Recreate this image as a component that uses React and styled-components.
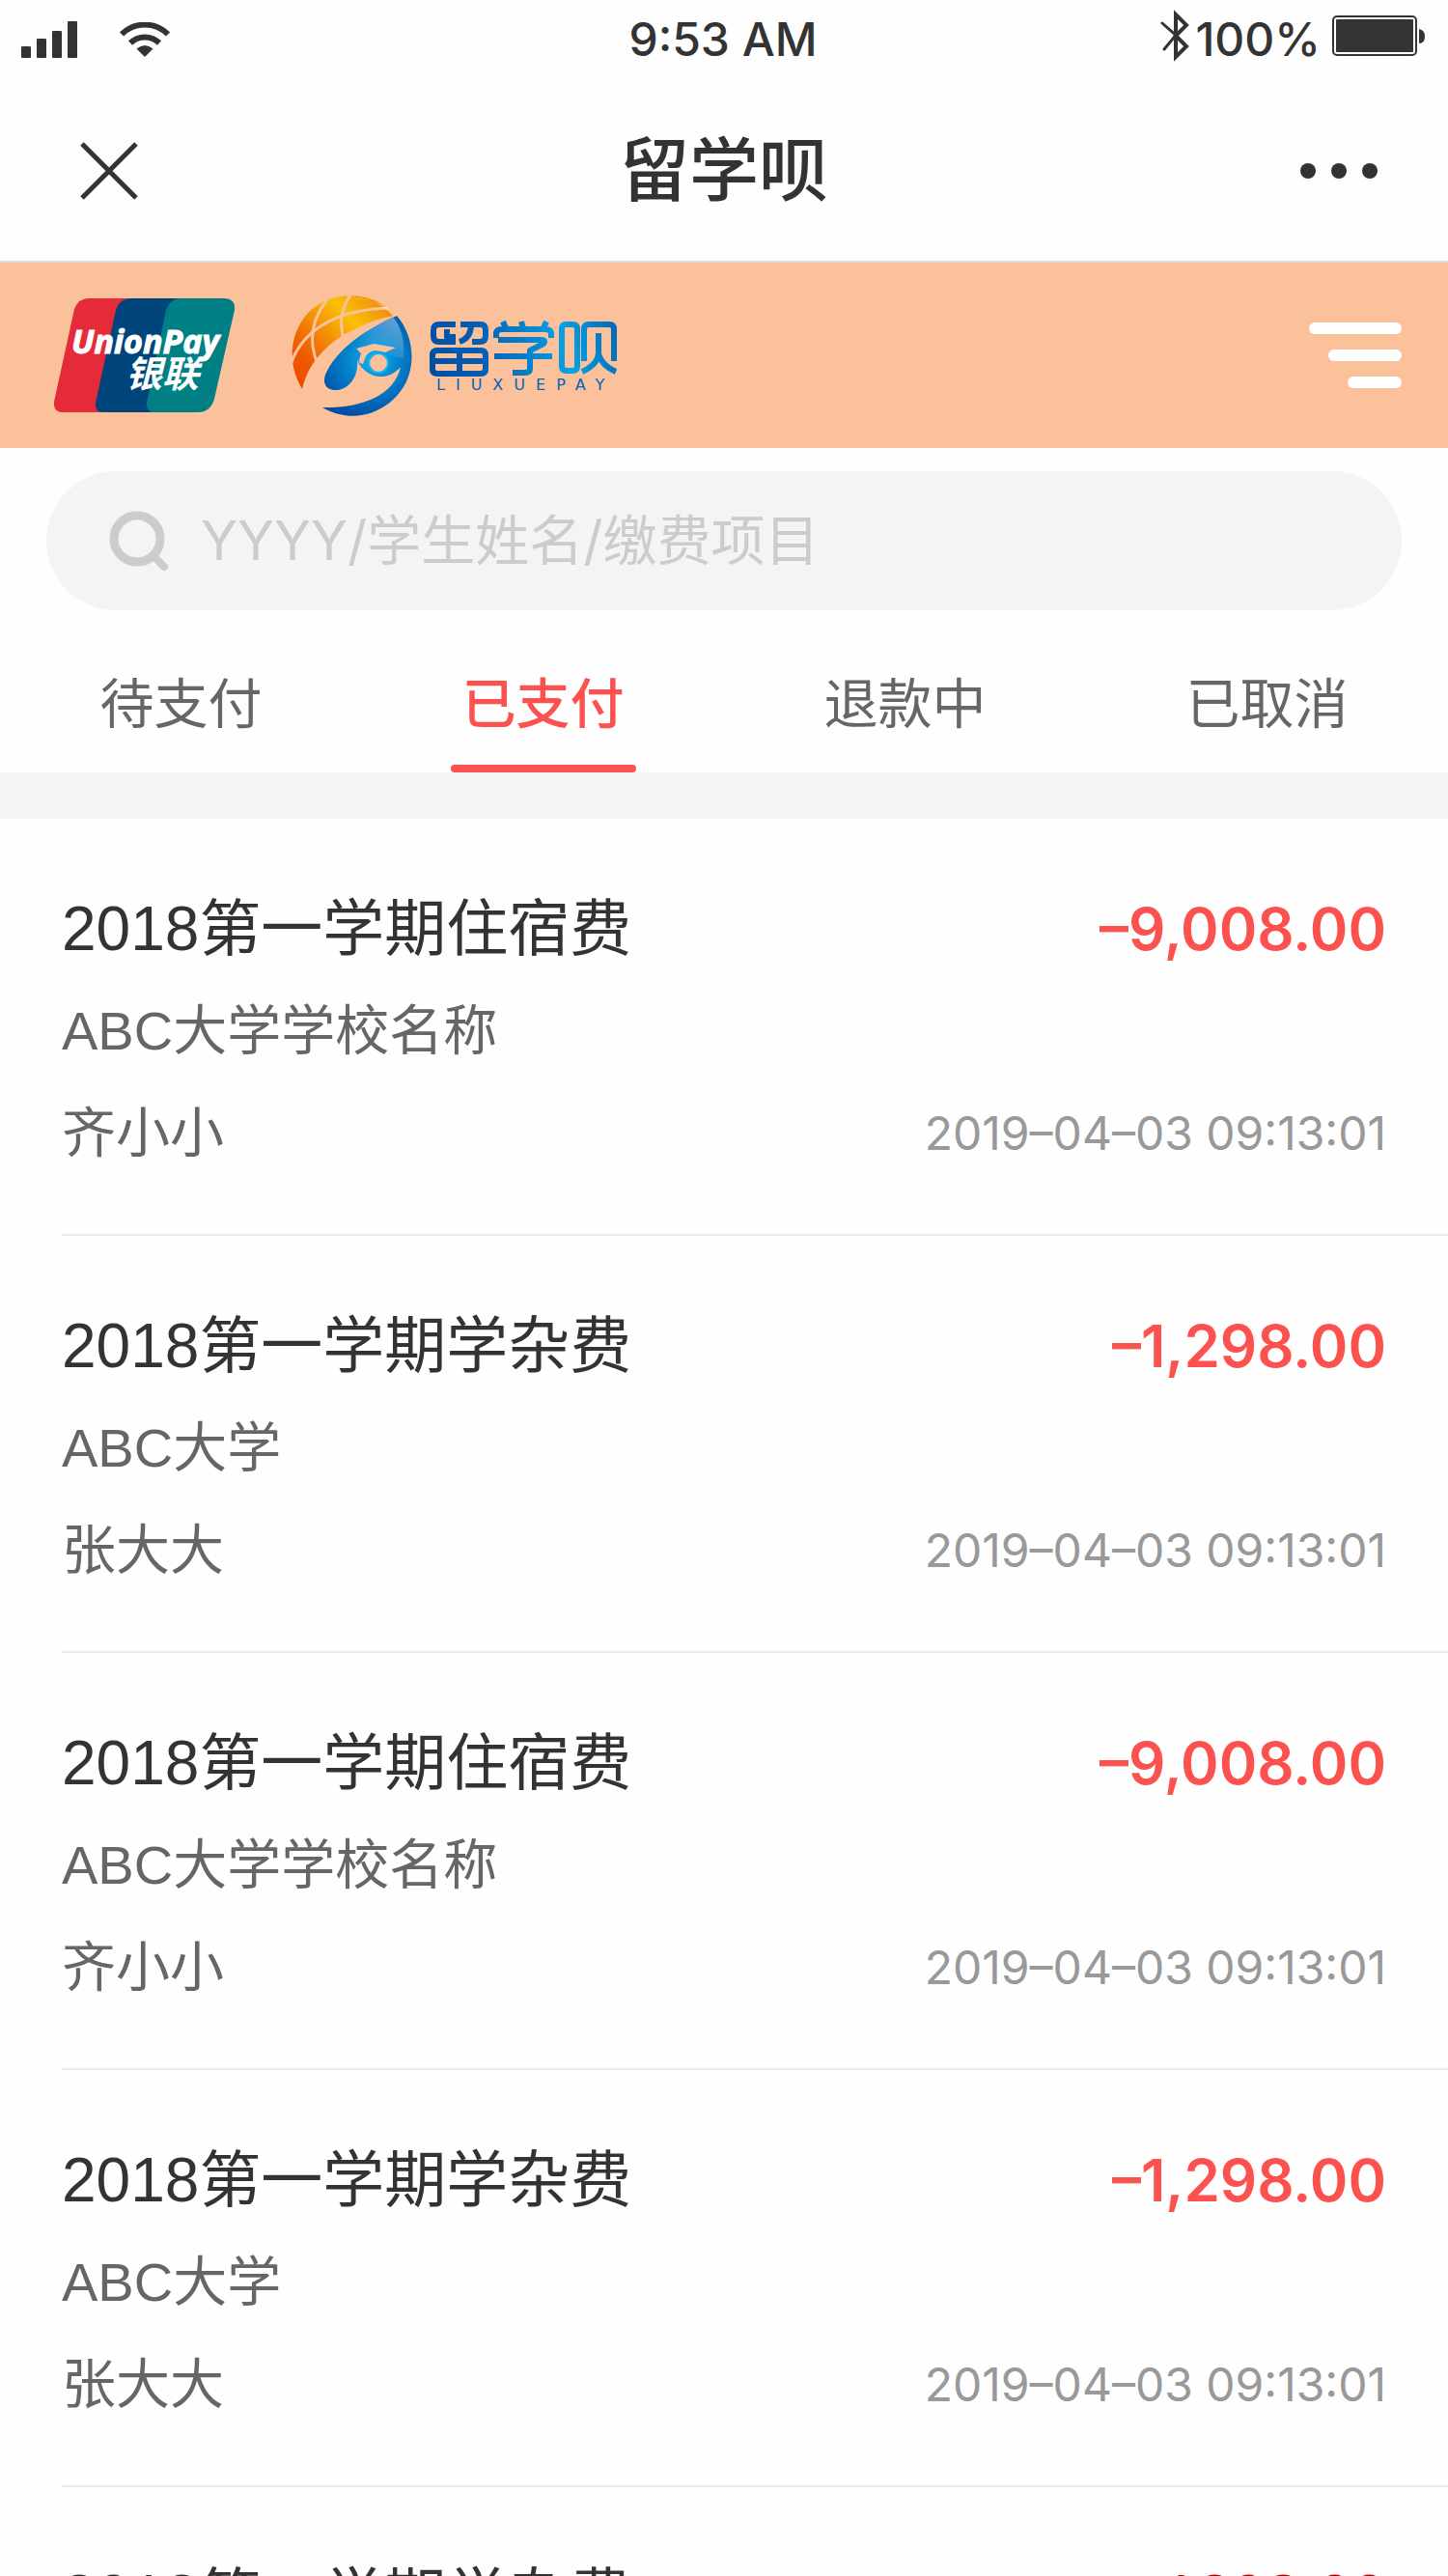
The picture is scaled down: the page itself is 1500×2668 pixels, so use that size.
import React, { useId, useState } from 'react';
import styled, { createGlobalStyle, css } from 'styled-components';

const textStack = '"Liberation Sans", "Noto Sans CJK SC", sans-serif';
const figureStack = 'Inter, "Noto Sans CJK SC", sans-serif';

const GlobalStyle = createGlobalStyle`
  * { box-sizing: border-box; }
  body { margin: 0; background: #fff; }
  button, input { font: inherit; color: inherit; border: 0; background: none; padding: 0; margin: 0; }
  button { cursor: pointer; }
`;

const Screen = styled.div`
  display: flex;
  flex-direction: column;
  height: 100vh;
  overflow: hidden;
  background: #fefefe;
  color: #333;
  font-family: ${textStack};
`;

const StatusBar = styled.div`
  display: grid;
  grid-template-columns: 1fr auto 1fr;
  align-items: center;
  flex: none;
  height: 80px;
  padding: 2px 24px 0 22px;
  font: 500 48px/56px ${figureStack};
`;

const StatusGroup = styled.div`
  display: flex;
  align-items: center;
  justify-content: ${(p) => (p.$end ? 'flex-end' : 'flex-start')};
  gap: ${(p) => p.$gap}px;
  ${(p) => p.$end && css`
    svg { margin-bottom: 8px; }
  `}
`;

const NavBar = styled.header`
  display: grid;
  grid-template-columns: 1fr auto 1fr;
  align-items: center;
  flex: none;
  height: 192px;
  padding: 4px 72px 0;
  border-bottom: 2px solid #ddd;
`;

const NavTitle = styled.h1`
  margin: 0;
  font-size: 72px;
  line-height: 96px;
  font-weight: 500;
`;

const IconButton = styled.button`
  display: flex;
  justify-content: center;
  justify-self: ${(p) => (p.$end ? 'end' : 'start')};
  width: 82px;
`;

const BrandBar = styled.div`
  display: flex;
  align-items: center;
  flex: none;
  gap: 58px;
  height: 192px;
  padding: 0 48px 0 56px;
  background: #fac19b;
`;

const MenuButton = styled.button`
  display: flex;
  margin-left: auto;
`;

const SearchBox = styled.label`
  display: flex;
  align-items: center;
  flex: none;
  gap: 32px;
  height: 144px;
  margin: 24px 48px 0;
  padding: 0 64px;
  border-radius: 72px;
  background: #f4f4f4;
`;

const SearchInput = styled.input`
  flex: 1;
  min-width: 0;
  height: 84px;
  font-family: ${figureStack};
  font-size: 56px;
  outline: none;
  &::placeholder { color: #ccc; opacity: 1; }
`;

const Tabs = styled.nav`
  display: grid;
  grid-template-columns: repeat(4, 1fr);
  flex: none;
  height: 168px;
`;

const Tab = styled.button`
  display: flex;
  flex-direction: column;
  align-items: center;
  justify-content: flex-end;
  gap: 22px;
  font-size: 56px;
  line-height: 80px;
  font-weight: ${(p) => (p.$active ? 500 : 400)};
  color: ${(p) => (p.$active ? '#fb524f' : '#666')};
  &::after {
    content: '';
    width: 192px;
    height: 8px;
    border-radius: 4px;
    background: ${(p) => (p.$active ? '#fb524f' : 'transparent')};
  }
`;

const List = styled.ul`
  flex: 1;
  min-height: 0;
  margin: 0;
  padding: 0;
  list-style: none;
  border-top: 48px solid #f4f4f4;
  overflow-y: auto;
  scrollbar-width: none;
`;

const Bill = styled.li`
  display: flex;
  flex-direction: column;
  gap: 2px;
  height: 432px;
  margin-left: 64px;
  padding: 62px 64px 0 0;
  border-bottom: 2px solid #eaeaea;
`;

const BillLine = styled.div`
  display: flex;
  align-items: center;
  justify-content: space-between;
  min-height: 104px;
  color: #666;
  font-size: 56px;
  line-height: 80px;
`;

const BillTitle = styled.h2`
  margin: 0;
  color: #333;
  font-size: 64px;
  line-height: 96px;
  font-weight: 400;
`;

const Amount = styled.strong`
  color: #fb524f;
  font: 600 60px/96px ${figureStack};
  ${(p) => p.$deep && css`
    color: #c00;
    font: 400 64px/96px ${textStack};
  `}
`;

const PaidAt = styled.time`
  color: #999;
  font-family: ${figureStack};
  font-size: 48px;
`;

const Signal = () => (
  <svg width="58" height="38" viewBox="0 0 58 38" fill="#333" aria-hidden="true">
    <rect y="26" width="10" height="12" rx="1" />
    <rect x="16" y="18" width="10" height="20" rx="1" />
    <rect x="32" y="10" width="10" height="28" rx="1" />
    <rect x="48" width="10" height="38" rx="1" />
  </svg>
);

const Wifi = () => (
  <svg width="52" height="36" viewBox="0 0 52 36" fill="none" stroke="#333" strokeWidth="6" aria-hidden="true">
    <path d="M2 12.500a34 34 0 0 1 48 0" />
    <path d="M11 21.500a21.500 21.500 0 0 1 30 0" />
    <path d="M17.500 27.500q8.500-7 17 0L26 36z" fill="#333" stroke="none" />
  </svg>
);

const Bluetooth = () => (
  <svg width="30" height="54" viewBox="0 0 30 54" fill="none" stroke="#333" aria-hidden="true">
    <path d="M2 14l14 12.500L4 41" strokeWidth="3" strokeLinecap="round" />
    <path d="M16 5v44L27 38 16 27 27 16z" strokeWidth="4" />
  </svg>
);

const Battery = () => (
  <svg width="96" height="42" viewBox="0 0 96 42" fill="#333" aria-hidden="true">
    <rect x="1" y="1" width="86" height="40" rx="4" fill="none" stroke="#333" strokeWidth="2" />
    <rect x="4" y="4" width="80" height="34" rx="1" />
    <path d="M90 14q6 1 6 8t-6 7z" />
  </svg>
);

const UnionPayLogo = () => (
  <svg width="188" height="118" viewBox="0 0 188 118" role="img" aria-label="UnionPay 银联">
    <path d="M36 0h50L60 118H9q-10 0-9-11L21 11Q25 0 36 0z" fill="#e52a3a" />
    <path d="M81 0h58L120 118H51q-9 0-8-10L64 12Q68 0 81 0z" fill="#00447c" />
    <path d="M132 0h44q12 0 11 12L166 104q-4 14-17 14h-45q-9 0-8-10L116 12Q120 0 132 0z" fill="#007f84" />
    <g fill="#fff" fontStyle="italic" fontWeight="700">
      <text x="18" y="57" fontFamily='"Open Sans", sans-serif' fontSize="34" stroke="#fff" strokeWidth="1">UnionPay</text>
      <text x="74" y="92" fontFamily='"Noto Sans CJK SC", sans-serif' fontSize="38">银联</text>
    </g>
  </svg>
);

const LiuxuePayLogo = () => {
  const id = useId();
  const ref = (name) => `url(#${id}${name})`;
  return (
    <svg width="338" height="126" viewBox="0 0 338 126" role="img" aria-label="留学呗 LIUXUEPAY">
      <defs>
        <linearGradient id={`${id}sun`} x1="0" y1=".9" x2="1" y2=".1">
          <stop offset="0" stopColor="#ec4a00" />
          <stop offset=".2" stopColor="#ee5a04" />
          <stop offset=".45" stopColor="#f49208" />
          <stop offset=".66" stopColor="#fbc005" />
          <stop offset="1" stopColor="#f08010" />
        </linearGradient>
        <radialGradient id={`${id}sea`} gradientUnits="userSpaceOnUse" cx="84" cy="68" r="60">
          <stop offset="0" stopColor="#10b2ee" />
          <stop offset=".45" stopColor="#0583cc" />
          <stop offset="1" stopColor="#004fa6" />
        </radialGradient>
        <linearGradient id={`${id}shine`} x1="1" y1="0" x2=".4" y2=".8">
          <stop offset="0" stopColor="#fff" stopOpacity=".6" />
          <stop offset="1" stopColor="#fff" stopOpacity="0" />
        </linearGradient>
        <linearGradient id={`${id}word`} gradientUnits="userSpaceOnUse" x1="144" y1="80" x2="336" y2="30">
          <stop offset="0" stopColor="#004ea4" />
          <stop offset=".3" stopColor="#0560b4" />
          <stop offset=".72" stopColor="#05a2e4" />
          <stop offset="1" stopColor="#0668b8" />
        </linearGradient>
      </defs>
      <path d="M11 98C-12 60 6 14 42 4c24-7 50-1 66 18C80 26 68 36 55 41 38 52 18 68 11 98z" fill={ref('sun')} />
      <g fill="none" stroke="#fac19b" strokeWidth="3">
        <path d="M0 70C14 32 54 15 102 14" />
        <path d="M61 1Q47 20 54 46" />
        <path d="M38 4Q12 36 27 72" />
      </g>
      <path
        d="M109 22C123 38 128 62 122 82C113 114 72 140 32 117C70 118 106 106 113 75C98 92 76 86 68 68C70 86 58 99 46 99C34 99 31 89 37 79C50 54 80 34 109 22z"
        fill={ref('sea')}
      />
      <path d="M62 4c38-2 58 30 54 62-16 0-26-16-44-14-10 1-17 7-26 10C62 42 86 32 109 22 96 8 80 5 62 4z" fill={ref('shine')} />
      <circle cx="90" cy="71" r="11" fill="#10b2ee" />
      <circle cx="90" cy="71" r="9" fill="#fac19b" />
      <path d="M67 56l18-5 23 4-11 5q-15-5-20 4l-3 8q-5-1-4-4l2-7z" fill="#fac19b" />
      <g fill="none" stroke={ref('word')} strokeWidth="6" strokeLinejoin="round">
        <path d="M170 31h-17q-6 0-6 6v6q0 6 6 6h17M161 36v8h9M175 31h21q5 0 5 6v6q0 6-6 6h-8M186 31q0 14-12 18" />
        <path d="M151 58h45q5 0 5 5v14q0 5-5 5h-45q-5 0-5-5V63q0-5 5-5zM147 69h55M174 58v24" />
        <path d="M212 45v-4q0-5 6-5h45q6 0 6 5v4M219 28l3 7M238 28l2 7M264 28l-3 7M214 47h45q5 0 2 4l-14 7v19q0 4-5 4h-13M210 64h60" />
        <path d="M284 31h7q5 0 5 5v38q0 5-5 5h-6q-5 0-5-5V36q0-5 4-5zM303 69V36q0-5 5-5h21q5 0 5 5v33M318 40v20q0 12-17 20M318 62q4 12 18 18" />
      </g>
      <text x="150" y="99" fill="#0564b6" fontFamily='"DejaVu Sans", sans-serif' fontSize="16" letterSpacing="11">LIUXUEPAY</text>
    </svg>
  );
};

const bills = [
  { id: 1, title: '2018第一学期住宿费', school: 'ABC大学学校名称', student: '齐小小', amount: '–9,008.00' },
  { id: 2, title: '2018第一学期学杂费', school: 'ABC大学', student: '张大大', amount: '–1,298.00' },
  { id: 3, title: '2018第一学期住宿费', school: 'ABC大学学校名称', student: '齐小小', amount: '–9,008.00' },
  { id: 4, title: '2018第一学期学杂费', school: 'ABC大学', student: '张大大', amount: '–1,298.00' },
  { id: 5, title: '2018第一学期学杂费', school: 'ABC大学', student: '张大大', amount: '-1298.00', deep: true },
];

const tabs = ['待支付', '已支付', '退款中', '已取消'];

export default function App() {
  const [active, setActive] = useState('已支付');
  return (
    <Screen>
      <GlobalStyle />
      <StatusBar>
        <StatusGroup $gap={44}><Signal /><Wifi /></StatusGroup>
        <span>9:53 AM</span>
        <StatusGroup $end $gap={12}>
          <StatusGroup $gap={6}><Bluetooth />100%</StatusGroup>
          <Battery />
        </StatusGroup>
      </StatusBar>
      <NavBar>
        <IconButton aria-label="关闭">
          <svg width="60" height="60" viewBox="0 0 60 60" stroke="#333" strokeWidth="5" aria-hidden="true">
            <path d="M2 2l56 56M58 2L2 58" />
          </svg>
        </IconButton>
        <NavTitle>留学呗</NavTitle>
        <IconButton $end aria-label="更多">
          <svg width="80" height="16" viewBox="0 0 80 16" fill="#333" aria-hidden="true">
            <circle cx="8" cy="8" r="8" />
            <circle cx="40" cy="8" r="8" />
            <circle cx="72" cy="8" r="8" />
          </svg>
        </IconButton>
      </NavBar>
      <BrandBar>
        <UnionPayLogo />
        <LiuxuePayLogo />
        <MenuButton aria-label="菜单">
          <svg width="96" height="68" viewBox="0 0 96 68" fill="#fff" aria-hidden="true">
            <rect width="96" height="12" rx="6" />
            <rect x="20" y="28" width="76" height="12" rx="6" />
            <rect x="40" y="56" width="56" height="12" rx="6" />
          </svg>
        </MenuButton>
      </BrandBar>
      <SearchBox>
        <svg width="64" height="64" viewBox="0 0 64 64" fill="none" stroke="#ccc" aria-hidden="true">
          <circle cx="30" cy="30" r="24" strokeWidth="9" />
          <path d="M49 50l9 9" strokeWidth="8" strokeLinecap="round" />
        </svg>
        <SearchInput type="search" aria-label="搜索" placeholder="YYYY/学生姓名/缴费项目" />
      </SearchBox>
      <Tabs>
        {tabs.map((name) => (
          <Tab key={name} $active={name === active} onClick={() => setActive(name)}>{name}</Tab>
        ))}
      </Tabs>
      <List>
        {bills.map((bill) => (
          <Bill key={bill.id}>
            <BillLine>
              <BillTitle>{bill.title}</BillTitle>
              <Amount $deep={bill.deep}>{bill.amount}</Amount>
            </BillLine>
            <BillLine>{bill.school}</BillLine>
            <BillLine>
              <span>{bill.student}</span>
              <PaidAt dateTime="2019-04-03T09:13:01">2019–04–03 09:13:01</PaidAt>
            </BillLine>
          </Bill>
        ))}
      </List>
    </Screen>
  );
}
